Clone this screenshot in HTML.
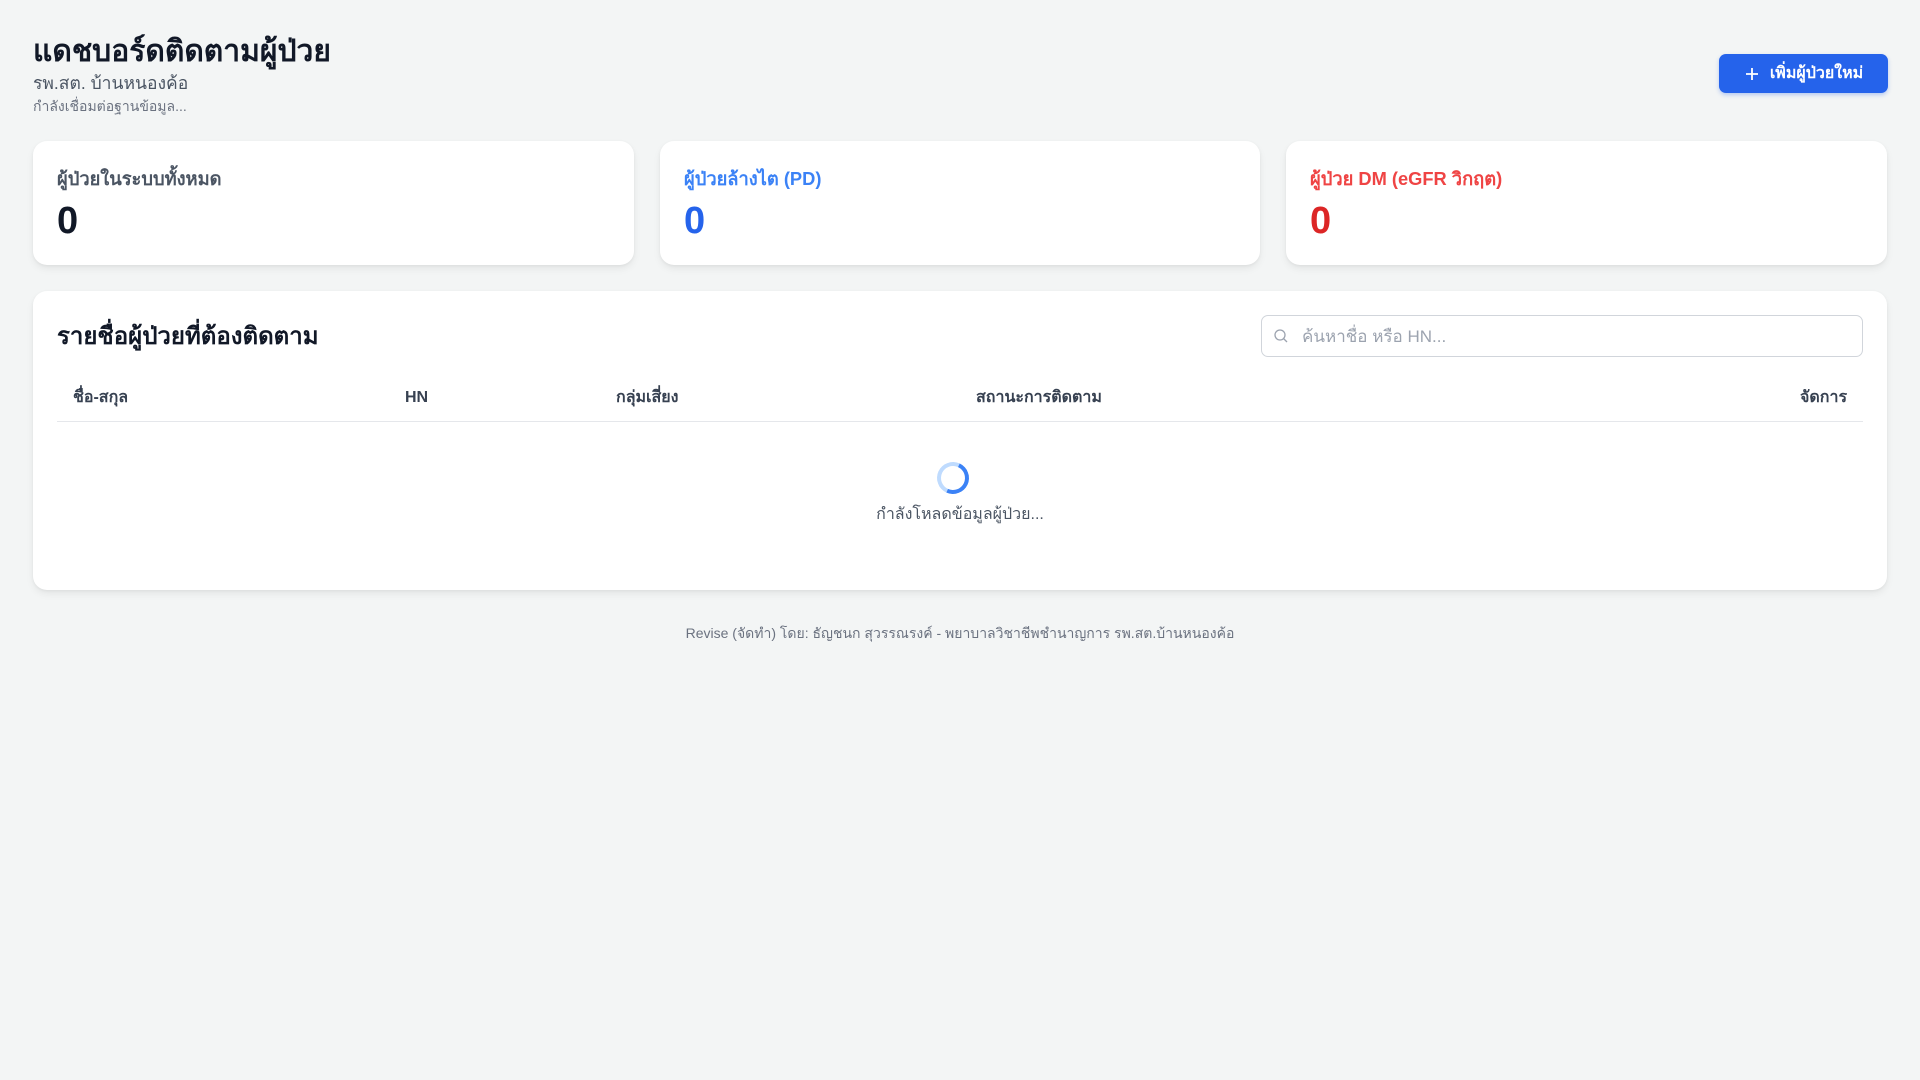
<!DOCTYPE html>
<html><head><meta charset="utf-8"><style>
*{margin:0;padding:0;box-sizing:border-box}
body{width:1920px;height:1080px;background:#f3f5f5;font-family:"Liberation Sans","Noto Sans CJK SC",sans-serif;position:relative;overflow:hidden;color:#111827}
.a{position:absolute;white-space:nowrap}
.card{position:absolute;background:#fff;border-radius:14px;box-shadow:0 4px 8px rgba(0,0,0,.06),0 1px 3px rgba(0,0,0,.05)}
.lbl{position:absolute;left:24px;top:24px;font-size:18.3px;font-weight:bold}
.num{position:absolute;left:24px;top:59px;font-size:38px;font-weight:bold}
.th{position:absolute;top:383px;height:30px;line-height:30px;font-size:16px;font-weight:bold;color:#374151}
</style></head><body>
<div class="a" style="left:33px;top:28px;font-size:30px;font-weight:bold;color:#111827">แดชบอร์ดติดตามผู้ป่วย</div>
<div class="a" style="left:33px;top:69px;font-size:17.5px;color:#4b5563">รพ.สต. บ้านหนองค้อ</div>
<div class="a" style="left:33px;top:96px;font-size:14px;color:#6b7280">กำลังเชื่อมต่อฐานข้อมูล...</div>
<div class="a" style="left:1719px;top:54px;width:169px;height:39px;background:#2563eb;border-radius:7px;color:#fff;font-size:16px;font-weight:bold;display:flex;align-items:center;justify-content:center;gap:10px;box-shadow:0 2px 4px rgba(37,99,235,.3)"><svg width="16" height="16" viewBox="0 0 16 16"><path d="M8 2v12M2 8h12" stroke="#fff" stroke-width="1.8"/></svg>เพิ่มผู้ป่วยใหม่</div>

<div class="card" style="left:33px;top:141px;width:601px;height:124px"><div class="lbl" style="color:#4b5563">ผู้ป่วยในระบบทั้งหมด</div><div class="num" style="color:#111827">0</div></div>
<div class="card" style="left:660px;top:141px;width:600px;height:124px"><div class="lbl" style="color:#3b82f6">ผู้ป่วยล้างไต (PD)</div><div class="num" style="color:#2563eb">0</div></div>
<div class="card" style="left:1286px;top:141px;width:601px;height:124px"><div class="lbl" style="color:#ef4444">ผู้ป่วย DM (eGFR วิกฤต)</div><div class="num" style="color:#dc2626">0</div></div>

<div class="card" style="left:33px;top:291px;width:1854px;height:299px"></div>
<div class="a" style="left:57px;top:316px;font-size:24px;font-weight:bold;color:#111827">รายชื่อผู้ป่วยที่ต้องติดตาม</div>
<div class="a" style="left:1261px;top:315px;width:602px;height:42px;border:1px solid #d1d5db;border-radius:7px;background:#fff"></div>
<svg class="a" style="left:1273px;top:328px" width="16" height="16" viewBox="0 0 16 16"><circle cx="7" cy="7" r="5" fill="none" stroke="#9ca3af" stroke-width="1.3"/><path d="M10.5 10.5l3.5 3.5" stroke="#9ca3af" stroke-width="1.3"/></svg>
<div class="a" style="left:1302px;top:323px;font-size:17px;color:#9ca3af">ค้นหาชื่อ หรือ HN...</div>
<div class="th" style="left:73px">ชื่อ-สกุล</div>
<div class="th" style="left:405px">HN</div>
<div class="th" style="left:616px">กลุ่มเสี่ยง</div>
<div class="th" style="left:976px">สถานะการติดตาม</div>
<div class="th" style="left:1800px">จัดการ</div>
<div class="a" style="left:57px;top:421px;width:1806px;height:1px;background:#e5e7eb"></div>
<div class="a" style="left:937px;top:462px;width:32px;height:32px;border-radius:50%;border:4px solid #bfdbfe;border-right-color:#3b82f6;border-bottom-color:#3b82f6;transform:rotate(-20deg)"></div>
<div class="a" style="left:0;width:1920px;text-align:center;top:502px;font-size:16px;color:#4b5563">กำลังโหลดข้อมูลผู้ป่วย...</div>
<div class="a" style="left:0;width:1920px;text-align:center;top:623px;font-size:14px;color:#6b7280">Revise (จัดทำ) โดย: ธัญชนก สุวรรณรงค์ - พยาบาลวิชาชีพชำนาญการ รพ.สต.บ้านหนองค้อ</div>
</body></html>
